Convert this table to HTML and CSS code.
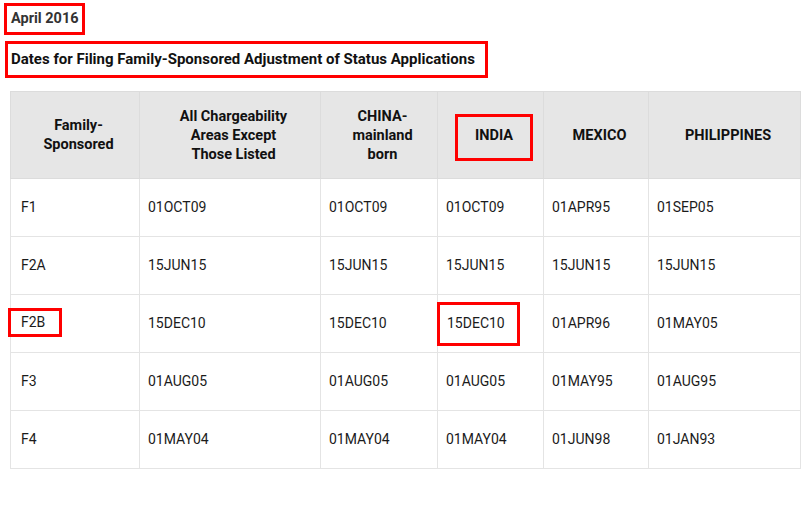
FILE: index.html
```html
<!DOCTYPE html>
<html>
<head>
<meta charset="utf-8">
<title>Visa Bulletin – April 2016</title>
<link rel="stylesheet" href="styles.css">
</head>
<body>
<div class="page">
  <div class="month"><span class="mark mark-month">April 2016</span></div>
  <div class="heading"><span class="mark mark-title">Dates for Filing Family-Sponsored Adjustment of Status Applications</span></div>
  <table class="dates">
    <colgroup>
      <col class="c1"><col class="c2"><col class="c3"><col class="c4"><col class="c5"><col class="c6">
    </colgroup>
    <thead>
      <tr>
        <th>Family-<br>Sponsored</th>
        <th>All Chargeability<br>Areas Except<br>Those Listed</th>
        <th>CHINA-<br>mainland<br>born</th>
        <th><span class="mark mark-india">INDIA</span></th>
        <th>MEXICO</th>
        <th>PHILIPPINES</th>
      </tr>
    </thead>
    <tbody>
      <tr><td>F1</td><td>01OCT09</td><td>01OCT09</td><td>01OCT09</td><td>01APR95</td><td>01SEP05</td></tr>
      <tr><td>F2A</td><td>15JUN15</td><td>15JUN15</td><td>15JUN15</td><td>15JUN15</td><td>15JUN15</td></tr>
      <tr><td><span class="mark mark-f2b">F2B</span></td><td>15DEC10</td><td>15DEC10</td><td><span class="mark mark-date">15DEC10</span></td><td>01APR96</td><td>01MAY05</td></tr>
      <tr><td>F3</td><td>01AUG05</td><td>01AUG05</td><td>01AUG05</td><td>01MAY95</td><td>01AUG95</td></tr>
      <tr><td>F4</td><td>01MAY04</td><td>01MAY04</td><td>01MAY04</td><td>01JUN98</td><td>01JAN93</td></tr>
    </tbody>
  </table>
</div>
</body>
</html>
```
FILE: styles.css
```css
html, body {
  margin: 0;
  padding: 0;
  background: #ffffff;
}

body {
  font-family: Roboto, "Liberation Sans", sans-serif;
  color: #1b1b1b;
}

.page {
  padding: 3px 0 0 4px;
}

.mark {
  display: inline-block;
  border: 3px solid #ff0000;
}

.month {
  line-height: 0;
}

.mark-month {
  font-weight: 700;
  font-size: 14.5px;
  line-height: 26px;
  color: #333333;
  padding: 0 3px 0 4px;
}

.heading {
  margin-top: 6px;
  margin-left: 1px;
  line-height: 0;
}

.mark-title {
  font-weight: 700;
  font-size: 15px;
  line-height: 31px;
  color: #111111;
  padding: 0 10px 0 3px;
}

.dates {
  margin-top: 13px;
  margin-left: 6px;
  width: 790px;
  border-collapse: collapse;
  table-layout: fixed;
}

.c1 { width: 129px; }
.c2 { width: 181px; }
.c3 { width: 117px; }
.c4 { width: 106px; }
.c5 { width: 105px; }
.c6 { width: 152px; }

.dates th {
  background: #e6e6e6;
  border: 1px solid #dcdcdc;
  height: 86px;
  padding: 0 4px 0 11px;
  font-size: 14.5px;
  font-weight: 700;
  line-height: 19px;
  color: #111111;
  text-align: center;
  vertical-align: middle;
}

.dates td {
  border: 1px solid #e4e4e4;
  height: 57px;
  padding: 0 10px 0 8px;
  font-size: 14px;
  line-height: 19px;
  text-align: left;
  vertical-align: middle;
}

.dates td:first-child {
  padding-left: 10px;
}

.mark-india {
  padding: 9px 17px 13px 17px;
  margin-top: 4px;
}

.mark-f2b {
  margin-left: -13px;
  padding: 0 14px 0 10px;
  line-height: 23px;
  margin-bottom: 3px;
}

.mark-date {
  margin-left: -9px;
  padding: 9px 12px 10px 7px;
}
```
